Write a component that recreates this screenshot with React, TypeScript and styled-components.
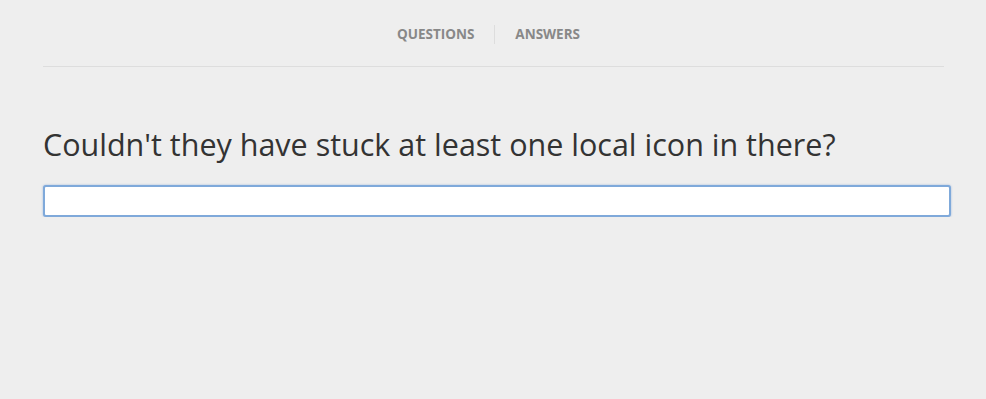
import React from "react";
import styled, { createGlobalStyle } from "styled-components";

const Global = createGlobalStyle`
  html, body { margin: 0; padding: 0; background: #eeeeee; }
  body { font-family: "Open Sans", "Noto Sans", sans-serif; }
`;

const Page = styled.div`
  padding: 0 42px 0 43px;
`;

const Nav = styled.nav`
  display: flex;
  justify-content: center;
  align-items: center;
  height: 67px;
  padding-right: 10px;
  padding-top: 2px;
  box-sizing: border-box;
  border-bottom: 1px solid #dddddd;
`;

const Tab = styled.a<{ $divider?: boolean }>`
  font-size: 13.5px;
  font-weight: 700;
  color: #888888;
  text-transform: uppercase;
  text-decoration: none;
  padding: 0 20px;
  line-height: 19px;
  border-left: ${(p) => (p.$divider ? "1px solid #dddddd" : "none")};
`;

const Heading = styled.h1`
  margin: 58px 0 0;
  font-size: 30.5px;
  font-weight: 400;
  color: #333333;
  line-height: 38px;
`;

const Input = styled.input`
  display: block;
  box-sizing: border-box;
  width: 908px;
  height: 32px;
  margin-top: 22px;
  border: 2px solid #7fa9da;
  border-radius: 3px;
  background: #ffffff;
  box-shadow: 0 0 2px rgba(90, 140, 210, 0.6);
  outline: none;
`;

export default function App() {
  return (
    <>
      <Global />
      <Page>
        <Nav>
          <Tab>Questions</Tab>
          <Tab $divider>Answers</Tab>
        </Nav>
        <Heading>Couldn't they have stuck at least one local icon in there?</Heading>
        <Input type="text" />
      </Page>
    </>
  );
}
